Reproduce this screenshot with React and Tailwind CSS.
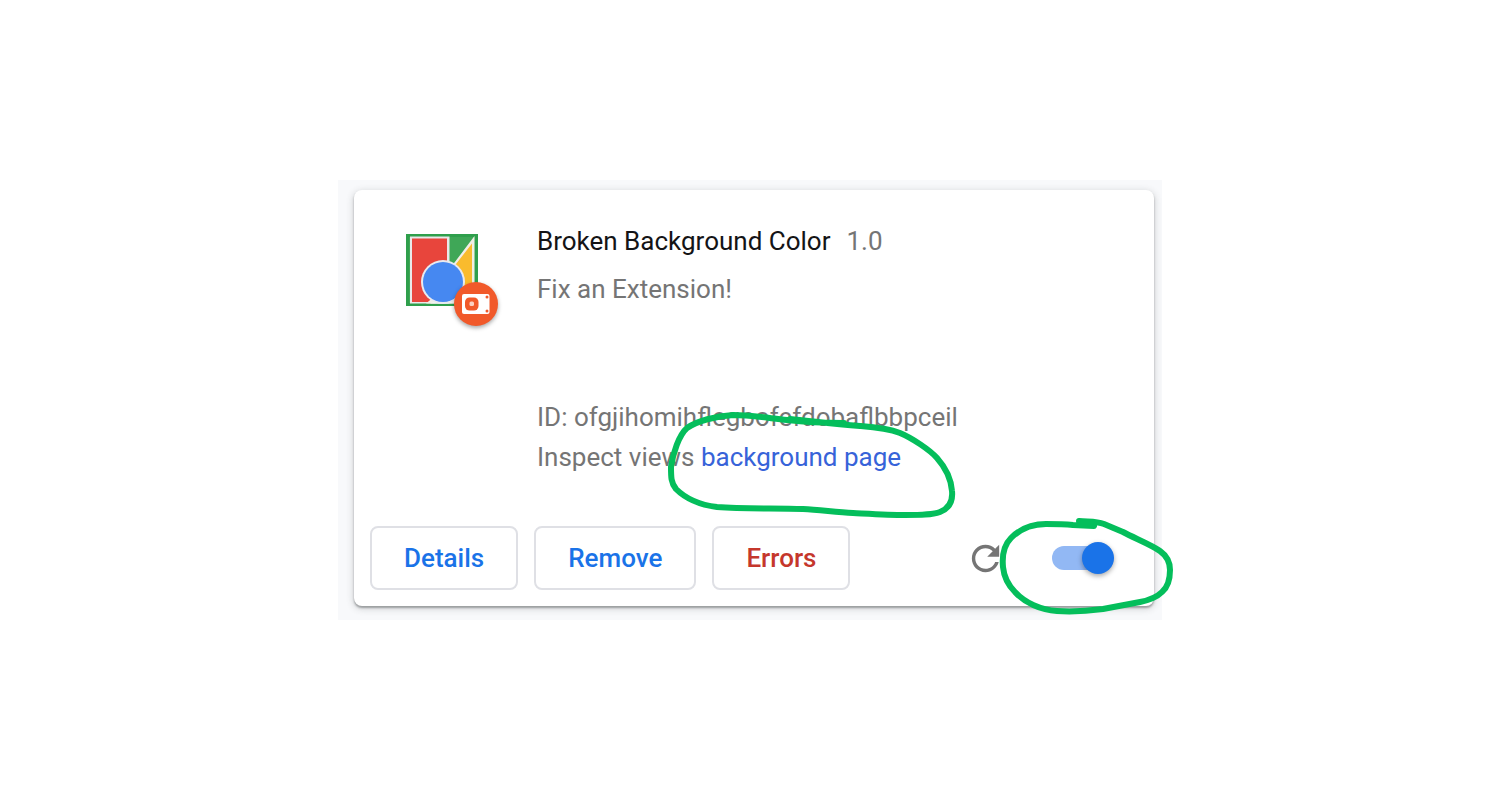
function ExtensionIcon() {
  return (
    <div className="relative h-[72px] w-[72px] shrink-0">
      <svg viewBox="0 0 72 72" className="h-full w-full" aria-hidden="true">
        <rect width="72" height="72" fill="#2f9f4c" />
        <rect x="3" y="3" width="66" height="66" fill="#3fa757" />
        <path d="M4 2.5H43.500V69.500H4Z" fill="#e9e9e9" />
        <path d="M6 4.500H41V68H6Z" fill="#e8453c" />
        <path d="M43 34L48.500 28.500L68.500 2V69.500H20L43 50Z" fill="#f1eee6" />
        <path d="M40 40L50 30L66 9.500V67H36Z" fill="#f9bb2d" />
        <path d="M24 69.500L37 64L60 58L68.500 62V69.500Z" fill="#f4f4f4" />
        <circle cx="37" cy="48" r="22" fill="#e8eaf0" />
        <circle cx="37" cy="48" r="20" fill="#4688f1" />
      </svg>
      <div className="absolute -right-5 -bottom-5 flex h-11 w-11 items-center justify-center rounded-full bg-[#f1592a] shadow-[0_2px_4px_rgba(0,0,0,0.35)]">
        <svg viewBox="0 0 28 20" className="h-5 w-7" aria-hidden="true">
          <rect width="27.500" height="20" rx="2" fill="#fff" />
          <rect x="3" y="3.500" width="13.500" height="13" rx="4.500" fill="#f1592a" />
          <rect x="7.500" y="7.500" width="4.500" height="4.500" rx="1.500" fill="#fbd0c2" />
          <circle cx="25" cy="3" r="1.500" fill="#f1592a" />
          <circle cx="25" cy="17" r="1.500" fill="#f1592a" />
        </svg>
      </div>
    </div>
  );
}

function ActionButton({ children, tone }) {
  return (
    <button
      type="button"
      className={`h-16 rounded-lg border-2 border-[#dfe0e5] bg-white px-8 text-[26px] leading-10 font-medium ${tone}`}
    >
      {children}
    </button>
  );
}

function Toggle() {
  return (
    <label className="relative block h-8 w-[62px]">
      <input
        type="checkbox"
        defaultChecked
        aria-label="Enable extension"
        className="peer mt-1 block h-6 w-14 appearance-none rounded-full bg-[#bdc1c6] checked:bg-[#92b8f4]"
      />
      <span className="absolute top-0 left-0 h-8 w-8 rounded-full bg-white shadow-[0_2px_5px_rgba(0,0,0,0.35)] peer-checked:right-0 peer-checked:left-auto peer-checked:bg-[#1a73e8]" />
    </label>
  );
}

function Annotations() {
  return (
    <svg
      viewBox="0 0 824 440"
      className="pointer-events-none absolute inset-0 h-full w-full overflow-visible"
      fill="none"
      stroke="#04be5b"
      strokeWidth="6"
      strokeLinecap="round"
      strokeLinejoin="round"
      aria-hidden="true"
    >
      <g transform="translate(-338 -180)">
        <path d="M844 423C820 423 804 422 787 420C768 418 750 415 733 415C716 416 697 421 687 428C679 435 673 453 671 467C671 477 671 483 676 489C686 499 701 505 717 507C745 509 776 508 803 509C820 510 836 512 853 513C873 514 890 515 905 515C920 515 932 515 940 512C950 508 953 501 952 491C951 478 945 467 937 458C930 450 912 438 900 433C887 428 873 427 860 426C833 424 811 421 790 419" />
        <path d="M1079 521L1094 526L1073 525C1063 524 1053 524 1046 524C1032 524 1020 529 1011 538C1004 545 1002 556 1003 567C1004 577 1008 585 1015 592C1025 603 1041 610 1057 611C1072 612 1088 611 1103 609L1140 602C1150 600 1158 596 1162 592C1168 587 1170 577 1170 570C1170 562 1167 556 1160 551C1152 545 1134 538 1123 532L1104 524C1096 521 1088 522 1079 521Z" />
      </g>
    </svg>
  );
}

export default function App() {
  return (
    <main className="flex min-h-screen items-center justify-center bg-white font-[Roboto,sans-serif]">
      <div className="relative w-full max-w-[824px] bg-[#f8f9fb] pt-[10px] pr-2 pb-[14px] pl-4">
        <article className="rounded-lg bg-white shadow-[0_2px_2px_rgba(60,64,67,0.4),0_2px_7px_1px_rgba(60,64,67,0.2)]">
          <div className="flex gap-[59px] pt-[31px] pl-[52px]">
            <div className="pt-[13px]">
              <ExtensionIcon />
            </div>
            <div className="text-[26px] leading-10 text-[#757575]">
              <div className="flex gap-4">
                <h1 className="text-[#141416]">Broken Background Color</h1>
                <span>1.0</span>
              </div>
              <p className="mt-2">Fix an Extension!</p>
              <p className="mt-[88px]">ID: ofgjihomihflegbofefdobaflbbpceil</p>
              <p>
                Inspect views{" "}
                <a href="#background-page" className="text-[#3763d9]">
                  background page
                </a>
              </p>
            </div>
          </div>
          <div className="mt-[49px] flex items-center gap-4 px-4 pb-4">
            <ActionButton tone="text-[#1a73e8]">Details</ActionButton>
            <ActionButton tone="text-[#1a73e8]">Remove</ActionButton>
            <ActionButton tone="text-[#c5372c]">Errors</ActionButton>
            <div className="mr-6 ml-auto flex items-center gap-[46px]">
              <button type="button" aria-label="Reload" className="text-[#757575]">
                <svg viewBox="0 0 24 24" className="h-[41px] w-[41px]" fill="currentColor" aria-hidden="true">
                  <path d="M17.65 6.35C16.2 4.9 14.21 4 12 4c-4.42 0-7.99 3.58-7.99 8s3.57 8 7.99 8c3.73 0 6.84-2.55 7.73-6h-2.08c-.82 2.33-3.04 4-5.65 4-3.31 0-6-2.69-6-6s2.69-6 6-6c1.66 0 3.14.69 4.22 1.78L13 11h7V4l-2.35 2.35z" />
                </svg>
              </button>
              <Toggle />
            </div>
          </div>
        </article>
        <Annotations />
      </div>
    </main>
  );
}
